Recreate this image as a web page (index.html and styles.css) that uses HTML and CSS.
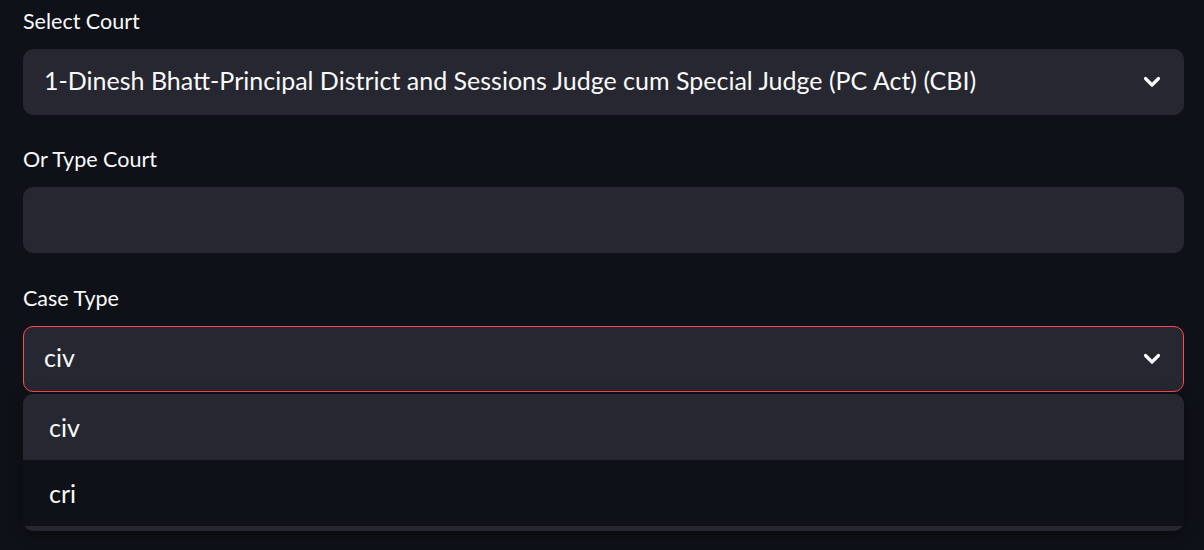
FILE: index.html
```html
<!DOCTYPE html>
<html lang="en">
<head>
<meta charset="utf-8">
<title>Court form</title>
<link rel="stylesheet" href="styles.css">
</head>
<body>
<main class="form">
  <div class="field">
    <label class="label">Select Court</label>
    <div class="box select">
      <span class="value">1-Dinesh Bhatt-Principal District and Sessions Judge cum Special Judge (PC Act) (CBI)</span>
      <svg class="chev" width="18" height="12" viewBox="0 0 18 12"><path d="M2.5 2.5 L9 9 L15.5 2.5" fill="none" stroke="#fafafa" stroke-width="3.2" stroke-linecap="round" stroke-linejoin="round"/></svg>
    </div>
  </div>
  <div class="field second">
    <label class="label">Or Type Court</label>
    <div class="box input"></div>
  </div>
  <div class="field last">
    <label class="label">Case Type</label>
    <div class="box select focused">
      <span class="value">civ</span>
      <svg class="chev" width="18" height="12" viewBox="0 0 18 12"><path d="M2.5 2.5 L9 9 L15.5 2.5" fill="none" stroke="#fafafa" stroke-width="3.2" stroke-linecap="round" stroke-linejoin="round"/></svg>
    </div>
    <ul class="menu">
      <li class="option active">civ</li>
      <li class="option">cri</li>
    </ul>
  </div>
</main>
</body>
</html>
```

FILE: styles.css
```css
html, body {
  margin: 0;
  padding: 0;
  background: #0e1117;
  color: #fafafa;
  font-family: Lato, "Noto Sans", sans-serif;
}
body {
  min-height: 550px;
}
.form {
  padding: 0 20px 0 23px;
  display: flex;
  flex-direction: column;
}
.field {
  display: flex;
  flex-direction: column;
  height: 138px;
}
.field.second {
  height: 139px;
}
.field.last {
  height: auto;
}
.label {
  display: block;
  font-size: 21.5px;
  line-height: 30px;
  padding-top: 6px;
  margin-bottom: 13px;
}
.box {
  box-sizing: border-box;
  height: 66px;
  background: #262730;
  border: 1px solid #262730;
  border-radius: 10px;
  display: flex;
  align-items: center;
  padding: 0 22px 0 20px;
}
.select .value {
  flex: 1;
  font-size: 25px;
  line-height: 30px;
  padding-bottom: 5px;
  white-space: nowrap;
  overflow: hidden;
}
.chev {
  flex: none;
  display: block;
}
.focused {
  border-color: #ff4b4b;
}
.menu {
  margin: 2px 0 0;
  padding: 0 0 5px;
  list-style: none;
  background: #262730;
  border-radius: 10px;
  overflow: hidden;
  box-shadow: 0 4px 16px rgba(0, 0, 0, 0.35);
}
.option {
  height: 66px;
  display: flex;
  align-items: center;
  padding-left: 26px;
  font-size: 25px;
  line-height: 30px;
  padding-bottom: 0;
  background: #0e1117;
}
.option.active {
  background: #262730;
}
```
